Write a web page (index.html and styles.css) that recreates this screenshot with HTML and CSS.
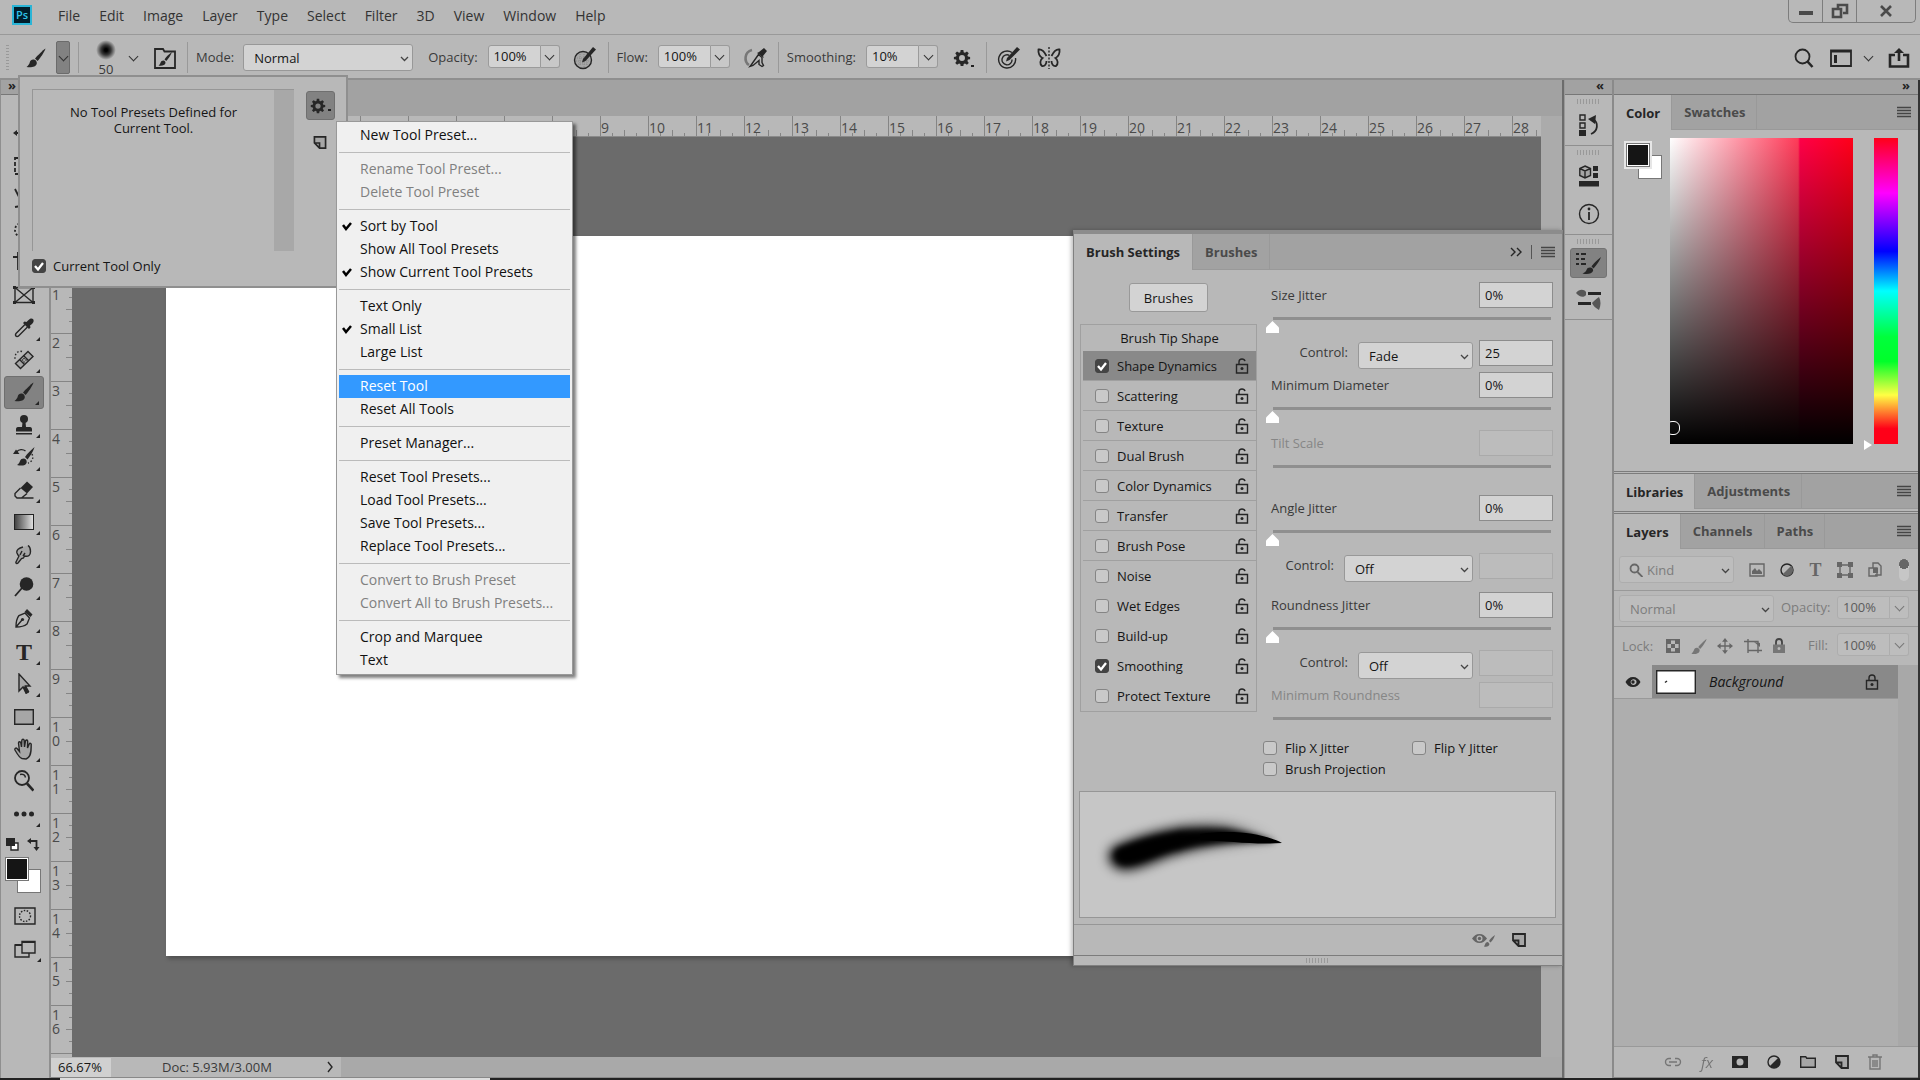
FILE: index.html
```html
<!DOCTYPE html>
<html lang="en">
<head>
    <meta charset="UTF-8">
    <meta name="viewport" content="width=device-width, initial-scale=1.0">
    <title>Photoshop</title>
    <link rel="stylesheet" href="styles.css">
</head>
<body>
    <svg class="sprite" aria-hidden="true">
        <symbol id="brush" viewBox="0 0 20 20"><path d="M19.5.5C17 2 11 8 9 10.5l2.5 2.500C14 10.500 18.500 4 19.500.5z"/><path d="M8 11.500c-2-.4-3.600.6-4.200 2.700-.5 2-1.500 3.400-3.300 4.800 4.500.9 9.500 0 10.300-3.500.3-1.900-.9-3.500-2.800-4z"/></symbol>
        <symbol id="gear" viewBox="0 0 20 20"><path fill-rule="evenodd" d="M8.500 1h3l.4 2.600 1.400.6 2.200-1.500 2 2-1.500 2.200.6 1.500 2.400.4v2.600l-2.400.4-.6 1.500 1.500 2.200-2 2-2.200-1.500-1.400.6-.4 2.400h-3l-.4-2.400-1.400-.6-2.200 1.500-2-2L4 13.300l-.6-1.500L1 11.400V8.800l2.400-.4L4 6.900 2.500 4.700l2-2 2.200 1.500 1.400-.6zM10 6.800a3.300 3.300 0 1 0 0 6.600 3.300 3.300 0 0 0 0-6.600z"/></symbol>
        <symbol id="page" viewBox="0 0 14 14"><path class="fillsoft" d="M1 1h12v12H6L1 8z"/><path class="ln2" d="M1 1h12v12H6.500L1 7.500zM1 7.500h5.500V13"/></symbol>
        <symbol id="menu" viewBox="0 0 14 12"><path class="ln" d="M0 1.500h14M0 4.500h14M0 7.500h14M0 10.500h14"/></symbol>
        <symbol id="unlock" viewBox="0 0 14 16"><path class="ln" d="M1.500 6.500h11v8.500h-11zM4 6.500V4c0-2 1-3 3-3 1.800 0 2.700.8 3 2.200"/><circle cx="7" cy="10.500" r="1.500"/></symbol>
        <symbol id="lock" viewBox="0 0 14 16"><path class="ln" d="M1.500 6.500h11v8.500h-11zM4 6.500V4c0-2 1-3 3-3s3 1 3 3v2.500"/><circle cx="7" cy="10.500" r="1.500"/></symbol>
        <symbol id="padlock" viewBox="0 0 14 16"><path class="ln2" d="M4 7V4c0-2 1-3 3-3s3 1 3 3v3"/><path fill-rule="evenodd" d="M1 6.500h12V15H1zM7 9a1.500 1.500 0 1 0 0 3 1.500 1.500 0 0 0 0-3z"/></symbol>
        <symbol id="eye" viewBox="0 0 16 12"><path fill-rule="evenodd" d="M8 1C4.500 1 2 3 .5 6c1.500 3 4 5 7.500 5s6-2 7.500-5C14 3 11.500 1 8 1zm0 2.200a3 2.900 0 1 1 0 5.700 3 2.900 0 0 1 0-5.700z"/><circle cx="8" cy="6" r="1.700"/></symbol>
        <symbol id="half" viewBox="0 0 14 14"><circle class="ln" cx="7" cy="7" r="6"/><path d="M11.300 2.700A6 6 0 1 1 2.700 11.300z"/></symbol>
    </svg>

    <header class="menubar">
        <div class="logo">Ps</div>
        <nav>
            <a href="#">File</a>
            <a href="#">Edit</a>
            <a href="#">Image</a>
            <a href="#">Layer</a>
            <a href="#">Type</a>
            <a href="#">Select</a>
            <a href="#">Filter</a>
            <a href="#">3D</a>
            <a href="#">View</a>
            <a href="#">Window</a>
            <a href="#">Help</a>
        </nav>
        <div class="window-buttons">
            <button aria-label="Minimize"><svg width="14" height="14" viewBox="0 0 14 14"><path d="M0 7h14v4H0z"/></svg></button>
            <button aria-label="Restore"><svg width="18" height="16" viewBox="0 0 18 16"><path class="ln3" d="M7 5V2h9v8h-4M2 6h8v8H2z"/></svg></button>
            <button class="close" aria-label="Close"><svg width="14" height="14" viewBox="0 0 14 14"><path class="ln3" d="M2 2l10 10M12 2L2 12"/></svg></button>
        </div>
    </header>

    <div class="options">
        <span class="grip-v"></span>
        <button class="opt-brush" aria-label="Brush tool"><svg width="20" height="20"><use href="#brush"/></svg></button>
        <button class="opt-drop" aria-label="Tool presets"></button>
        <span class="sep"></span>
        <div class="tip"><span class="tip-dot"></span><span>50</span></div>
        <button class="tip-drop" aria-label="Brush picker"></button>
        <button class="opt-folder" aria-label="Toggle brush settings"><svg width="24" height="24" viewBox="0 0 24 24"><path class="ln2" d="M2 3h8l1.500 2.500H22V22H2z"/><path d="M19 6c-3 2-6 5-7.500 7.500l1.800 1.600C15.500 12.500 18 9 19 6zM10.500 14.500c-1.500 0-2.500.8-3 2.300-.3 1.200-1 2-2 2.700 3 .6 6.600 0 7-2.500 0-1.300-.8-2.300-2-2.500z"/></svg></button>
        <span class="sep"></span>
        <label for="mode">Mode:</label>
        <select id="mode" class="mode"><option>Normal</option></select>
        <label for="opacity">Opacity:</label>
        <div class="combo"><input id="opacity" type="text" value="100%"><button aria-label="Opacity slider"></button></div>
        <button class="opt-icon" aria-label="Pressure for opacity"><svg width="24" height="24" viewBox="0 0 24 24"><circle class="ln fillsoft" cx="10" cy="14" r="8.500"/><path class="dash" d="M4 12h12M3 15h14M5 18h10M7 8v12M11 8v13M14 8v12"/><path d="M20 1l3 2.500L12.500 15 9 16.500l1-3.500z"/></svg></button>
        <span class="sep"></span>
        <label for="flow">Flow:</label>
        <div class="combo"><input id="flow" type="text" value="100%"><button aria-label="Flow slider"></button></div>
        <button class="opt-icon" aria-label="Airbrush"><svg width="24" height="20" viewBox="0 0 24 20"><path class="ln3 soft" d="M9 2C1 4 1 14 6 17"/><path d="M21 0l3 3-4 5 1 2-7-5 2-1z"/><path class="ln" d="M15.500 6.500L8.500 16.500 7 18.500l3-1 6-5v4l3 2 1.500-1-1.500-3V9.500z"/></svg></button>
        <span class="sep"></span>
        <label for="smooth">Smoothing:</label>
        <div class="combo"><input id="smooth" type="text" value="10%"><button aria-label="Smoothing slider"></button></div>
        <button class="opt-icon" aria-label="Smoothing options"><svg width="18" height="18"><use href="#gear"/></svg><span class="dot"></span></button>
        <span class="sep"></span>
        <button class="opt-icon" aria-label="Pressure for size"><svg width="24" height="24" viewBox="0 0 24 24"><path class="ln" d="M15 6.500A8.500 8.500 0 1 0 18.500 12M12.500 9.500A5 5 0 1 0 15 13.500"/><path d="M20 1l3 2.500L12.500 14 9 15.500l1-3.500z"/></svg></button>
        <button class="opt-icon" aria-label="Symmetry"><svg width="24" height="24" viewBox="0 0 24 24"><path class="ln2" d="M9.500 10C7 5 4 3 1.500 3.500 1 7 2.500 11 5.500 12c-2.500 2-3 6-.5 8 3 .5 4.500-2 4.500-5M14.500 10c2.500-5 5.500-7 8-6.500.5 3.500-1 7.500-4 8.500 2.500 2 3 6 .5 8-3 .5-4.500-2-4.500-5"/><path class="ln" stroke-dasharray="2 1.500" d="M12 1v22"/></svg></button>
        <div class="options-right">
            <button aria-label="Search"><svg width="20" height="20" viewBox="0 0 20 20"><circle class="ln2" cx="8.500" cy="8.500" r="7"/><path class="ln3" d="M13.500 13.500l5 5.500"/></svg></button>
            <button aria-label="Workspace"><svg width="22" height="18" viewBox="0 0 22 18"><path class="ln2" d="M1 1.500h20v15.500H1z"/><path d="M1 1h20v2.500H1zM4 6h3v8H4z"/></svg></button>
            <button class="tip-drop" aria-label="Workspace list"></button>
            <button aria-label="Share"><svg width="22" height="20" viewBox="0 0 22 20"><path class="ln3" d="M7 7H2v11.500h18V7h-5M11 13V3"/><path d="M11 0l5 5H6z"/></svg></button>
        </div>
    </div>

    <main class="workspace">
        <aside class="toolbar">
            <div class="strip left">»</div>
            <div class="tools">
                <button aria-label="Move"><svg width="22" height="22" viewBox="0 0 22 22"><path class="ln2" d="M11 3v16M3 11h16"/><path d="M11 0l3 4H8zM11 22l3-4H8zM0 11l4-3v6zM22 11l-4-3v6z"/></svg></button>
                <button aria-label="Marquee"><svg width="22" height="22" viewBox="0 0 22 22"><path class="ln2" stroke-dasharray="4 2" d="M2 3h18v16H2z"/></svg></button>
                <button aria-label="Lasso"><svg width="22" height="22" viewBox="0 0 22 22"><path class="ln2" d="M2 2l6 12 12-8-6 12-12 2"/></svg></button>
                <button aria-label="Quick selection"><svg width="22" height="22" viewBox="0 0 22 22"><circle class="ln2" stroke-dasharray="2 2" cx="9" cy="11" r="7"/></svg></button>
                <button aria-label="Crop"><svg width="22" height="22" viewBox="0 0 22 22"><path class="ln2" d="M5 0v17h17M0 5h17v17"/></svg></button>
                <button aria-label="Frame"><svg width="22" height="18" viewBox="0 0 22 18"><path class="ln" d="M2 1.500h18v15H2zM2 1.500l18 15M20 1.500l-18 15"/><path d="M0 0h3v3H0zM19 0h3v3h-3zM0 15h3v3H0zM19 15h3v3h-3z"/></svg></button>
                <button class="more" aria-label="Eyedropper"><svg width="20" height="20" viewBox="0 0 20 20"><path class="ln" d="M11 6.500L2 15.500c-1 1.500-.5 3 1 3 .5 0 1 0 1.500-.5l9-9"/><path d="M14 2.500c2-2.500 4-2.500 5-1.500s1 3-1 5l-2 1.500.5 2-1.500 1.500L9 5l1.500-1.500 2 .5z"/></svg></button>
                <button class="more" aria-label="Healing brush"><svg width="20" height="20" viewBox="0 0 20 20"><path class="ln fillsoft" d="M14 1.500l5 5-12.500 12-5-5z"/><path class="ln" d="M9.500 5.500l5 5M5.500 9.500l5 5"/><path class="ln" stroke-dasharray="1.500 2" d="M8 1.500C4 0 .5 4 1 9"/><circle cx="10" cy="8.500" r=".8"/><circle cx="12" cy="10" r=".8"/><circle cx="8.500" cy="10" r=".8"/><circle cx="10" cy="12" r=".8"/></svg></button>
                <button class="more active" aria-label="Brush"><svg width="20" height="20"><use href="#brush"/></svg></button>
                <button class="more" aria-label="Clone stamp"><svg width="18" height="20" viewBox="0 0 18 20"><circle cx="9" cy="4" r="4"/><path d="M7.500 7h3l.5 5h4c1.500 0 2 1 2 2.500v2H1v-2C1 13 1.500 12 3 12h4zM1 18h16v1.500H1z"/></svg></button>
                <button class="more" aria-label="History brush"><svg width="22" height="20" viewBox="0 0 22 20"><path d="M21.500 0C18 3 14 7 12 10l2.500 2.500C17 9.500 20.500 4 21.500 0zM11 11.500c-2 0-3.500.8-4 2.500s-1.500 3-3 4c4 1.200 9 .8 9.700-2.500.2-2-.8-3.700-2.700-4zM0 7l3-4.500L6.500 7z"/><path class="ln" d="M3.500 5C6 2 10 2 12.500 4"/><path class="ln" stroke-dasharray="1.500 2" d="M19 7c2 4 0 8-4 9"/></svg></button>
                <button class="more" aria-label="Eraser"><svg width="20" height="18" viewBox="0 0 20 18"><path d="M13 .5l6 5.500-6 6.500L6.500 7z"/><path class="ln" d="M6.500 7L1 12.500V15l2 2h4.500l5.500-4.500M5 17h14.500"/></svg></button>
                <button class="more" aria-label="Gradient"><span class="gradient-icon"></span></button>
                <button class="more" aria-label="Smudge"><svg width="18" height="20" viewBox="0 0 18 20"><path class="ln fillsoft" d="M8 2C4 3 1 5 2 8l1 2 1 1-3 6c-.5 1.500 1 2 2 1l3.500-4.500 2-.5 1-2c4 1 6-1 6-4.500 0-3-1-5-2.500-6"/><path class="ln" d="M5 10l2-4M8 11l2-3"/></svg></button>
                <button class="more" aria-label="Burn"><svg width="20" height="20" viewBox="0 0 20 20"><circle cx="12.500" cy="7" r="6.800"/><path class="ln2" d="M8 11l-7 8"/></svg></button>
                <button class="more" aria-label="Pen"><svg width="20" height="20" viewBox="0 0 20 20"><path class="ln" d="M2 18c0-5 1-9 3-11.500L11 4l4.500 5-2.500 6C10 17.500 6 18 2 18zl6-7"/><path d="M13 0l5.500 5.500L16.500 8 10.500 3z"/><circle cx="8.500" cy="10.500" r="1.600"/></svg></button>
                <button class="more serif" aria-label="Type">T</button>
                <button class="more" aria-label="Path selection"><svg width="16" height="22" viewBox="0 0 16 22"><path class="ln fillsoft" d="M3 1v17l4-4 3 6 2.500-1.500L9.500 13H14z"/><path d="M7 14l3 7 3-1.500L9.500 13z"/></svg></button>
                <button class="more" aria-label="Rectangle"><svg width="20" height="16" viewBox="0 0 20 16"><path class="ln fillsoft" d="M.7.7h18.600v14.600H.7z"/></svg></button>
                <button class="more" aria-label="Hand"><svg width="20" height="22" viewBox="0 0 20 22"><path class="ln fillsoft" d="M8 20.500c-3-1-5-5-7-8.500-.6-1.500 1-2.500 2-1.500l2.500 3-1-8.500c0-1.700 2-1.700 2.300 0L7.500 9l.3-6.500c.2-1.600 2.200-1.600 2.400 0L10.500 9l1-6c.3-1.500 2.200-1.200 2.200.3L13.500 10l1.700-4c.6-1.300 2.300-.6 2 .8C17 11 18 19 12 21z"/></svg></button>
                <button aria-label="Zoom"><svg width="20" height="22" viewBox="0 0 20 22"><circle class="ln2" cx="8" cy="8" r="7"/><path class="ln" d="M6 4.500c3-1 5 .5 5.500 3"/><path class="ln3" d="M13 13.500l6.500 7"/></svg></button>
                <button class="more" aria-label="Edit toolbar"><svg width="20" height="6" viewBox="0 0 20 6"><circle cx="2.500" cy="3" r="2.500"/><circle cx="10" cy="3" r="2.500"/><circle cx="17.500" cy="3" r="2.500"/></svg></button>
            </div>
            <div class="swap">
                <svg width="13" height="13" viewBox="0 0 13 13"><path class="ln white" d="M5 5h7v7H5z"/><path d="M0 0h9v8H0z"/></svg>
                <svg width="13" height="13" viewBox="0 0 13 13"><path class="ln2" d="M3 3h6.500v7"/><path d="M0 3l4-3v6zM9.500 13l-3-4h6z"/></svg>
            </div>
            <div class="colors"><span class="bg"></span><span class="fg"></span></div>
            <button class="mode-button" aria-label="Quick mask"><svg width="22" height="18" viewBox="0 0 22 18"><path class="ln" d="M1 1h20v16H1z"/><circle class="ln" stroke-dasharray="1.500 1.500" cx="11" cy="9" r="5.500"/></svg></button>
            <button class="mode-button more" aria-label="Screen mode"><svg width="22" height="18" viewBox="0 0 22 18"><path class="ln" d="M7 5H1v12h14v-4M8 1.500h13V13H8z"/><path d="M1 4h7v2H1zM8 1h13v2H8z"/></svg></button>
        </aside>

        <section class="document">
            <div class="doc-tabs"></div>
            <div class="doc-body">
                <div class="ruler-h">
                    <span></span><span></span><span></span><span></span><span></span><span></span><span></span><span></span><span></span><span></span><span></span><span>9</span><span>10</span><span>11</span><span>12</span><span>13</span><span>14</span><span>15</span><span>16</span><span>17</span><span>18</span><span>19</span><span>20</span><span>21</span><span>22</span><span>23</span><span>24</span><span>25</span><span>26</span><span>27</span><span>28</span>
                </div>
                <div class="ruler-v">
                    <span></span><span></span><span></span><span>1</span><span>2</span><span>3</span><span>4</span><span>5</span><span>6</span><span>7</span><span>8</span><span>9</span><span>10</span><span>11</span><span>12</span><span>13</span><span>14</span><span>15</span><span>16</span><span></span>
                </div>
                <div class="pasteboard"><div class="canvas"></div></div>
                <div class="scroll-v"></div>
            </div>
            <footer class="status">
                <input type="text" value="66.67%" aria-label="Zoom level">
                <span class="doc-size">Doc: 5.93M/3.00M</span>
                <button aria-label="Status menu"><svg width="6" height="12" viewBox="0 0 6 12"><path class="ln" d="M1 1l4 5-4 5"/></svg></button>
            </footer>
        </section>

        <aside class="dock">
            <div class="strip">«</div>
            <div class="dock-group">
                <span class="grip-h"></span>
                <button aria-label="History"><svg width="20" height="24" viewBox="0 0 20 24"><path class="ln" d="M1 2h5v5H1zM1 10h5v5H1z"/><path d="M0 17h7v6H0zM9 6l8-4-1 9z"/><path class="ln2" d="M14 6c6 4 5 12-2 15"/></svg></button>
            </div>
            <div class="dock-group">
                <span class="grip-h"></span>
                <button aria-label="Properties"><svg width="20" height="22" viewBox="0 0 20 22"><path class="ln fillsoft" d="M6 1l5.500 2.500v7L6 13 .8 10.500v-7zM.8 3.500L6 6l5.500-2.500M6 6v7"/><path d="M14 1h5v5h-5zM14 8h5v5h-5zM0 16h20v5.500H0z"/></svg></button>
                <button aria-label="Info"><svg width="22" height="22" viewBox="0 0 22 22"><circle class="ln" cx="11" cy="11" r="9.500"/><path class="ln2" d="M11 9v8"/><circle cx="11" cy="6" r="1.400"/></svg></button>
            </div>
            <div class="dock-group">
                <span class="grip-h"></span>
                <button class="active" aria-label="Brush settings"><svg width="26" height="24" viewBox="0 0 26 24"><path d="M0 2h3v2H0zM0 7h3v2H0zM0 12h3v2H0zM5 2h5v2H5zM5 7h4v2H5zM5 12h5v2H5zM25 6c-4 3-8 7-9.500 9.500l2 2C20.500 14 24 9.500 25 6zM14.500 16.500c-2-.2-3.500.6-4 2.500-.4 1.600-2 2.500-4 3.500 5 1.200 9.500.3 10.500-2.500.5-1.900-.8-3.300-2.500-3.500z"/></svg></button>
                <button aria-label="Brushes"><svg width="26" height="22" viewBox="0 0 26 22"><path class="fillmid" d="M0 5c3-4 8-4 10-1v3c-2 3-7 2-10-2zM16 15c2-2 4-4 7-6 2 4 2 8 0 13-3-2-6-4-7-7z"/><path d="M12 4h13v3H12zM2 14h13v3H2z"/></svg></button>
            </div>
        </aside>

        <aside class="panels">
            <div class="strip">»</div>
            <section class="panel color-panel">
                <div class="tabs"><button class="on">Color</button><button>Swatches</button><svg class="burger" width="14" height="12"><use href="#menu"/></svg></div>
                <div class="picker">
                    <div class="picker-swatch"><span class="bg"></span><span class="fg"></span></div>
                    <div class="field"><span class="field-mark"></span></div>
                    <div class="hue"><span class="hue-mark"></span></div>
                </div>
            </section>
            <section class="panel libraries">
                <div class="tabs"><button class="on">Libraries</button><button>Adjustments</button><svg class="burger" width="14" height="12"><use href="#menu"/></svg></div>
            </section>
            <section class="panel layers">
                <div class="tabs"><button class="on">Layers</button><button>Channels</button><button>Paths</button><svg class="burger" width="14" height="12"><use href="#menu"/></svg></div>
                <div class="layer-row filter">
                    <div class="kind"><svg width="14" height="14" viewBox="0 0 14 14"><circle class="ln2" cx="5.500" cy="5.500" r="4"/><path class="ln2" d="M8.500 9l5 5"/></svg><select aria-label="Filter kind" disabled><option>Kind</option></select></div>
                    <div class="filter-icons">
                        <svg width="16" height="14" viewBox="0 0 16 14"><path class="ln" d="M1 1h14v12H1z"/><path d="M3 11V8l3-3 2 3 2-2 3 3v2z"/></svg>
                        <svg width="14" height="14"><use href="#half"/></svg>
                        <span class="serif small">T</span>
                        <svg width="16" height="16" viewBox="0 0 16 16"><path class="ln" d="M3 3h10v10H3z"/><path d="M0 0h5v5H0zM11 0h5v5h-5zM0 11h5v5H0zM11 11h5v5h-5z"/></svg>
                        <svg width="14" height="16" viewBox="0 0 14 16"><path class="ln" d="M5 6V1h5l3 3v9H7M1 6h8v8H1z"/><path d="M5 6h5v5H5z"/></svg>
                    </div>
                    <span class="toggle"></span>
                </div>
                <div class="layer-row">
                    <select class="blend" aria-label="Blend mode" disabled><option>Normal</option></select>
                    <label for="lopacity">Opacity:</label>
                    <div class="combo"><input id="lopacity" type="text" value="100%" disabled><button aria-label="Layer opacity" disabled></button></div>
                </div>
                <div class="layer-row locks">
                    <span>Lock:</span>
                    <div class="lock-icons">
                        <svg width="14" height="14" viewBox="0 0 14 14"><path class="ln" d="M.7.7h12.600v12.600H.7z"/><path d="M1 1h4v4H1zM9 1h4v4H9zM5 5h4v4H5zM1 9h4v4H1zM9 9h4v4H9z"/></svg>
                        <svg width="16" height="17"><use href="#brush"/></svg>
                        <svg width="16" height="16" viewBox="0 0 22 22"><path class="ln2" d="M11 3v16M3 11h16"/><path d="M11 0l4 5H7zM11 22l4-5H7zM0 11l5-4v8zM22 11l-5-4v8z"/></svg>
                        <svg width="18" height="14" viewBox="0 0 18 14"><path class="ln" d="M0 2.500h14v9M4 0v11.500h14M4 12v2M14 12v2"/><path d="M10 3l6 5V4z"/></svg>
                        <svg width="14" height="16"><use href="#padlock"/></svg>
                    </div>
                    <label for="fill">Fill:</label>
                    <div class="combo"><input id="fill" type="text" value="100%" disabled><button aria-label="Layer fill" disabled></button></div>
                </div>
                <div class="layer-list">
                    <div class="layer">
                        <button class="eye" aria-label="Toggle visibility"><svg width="16" height="12"><use href="#eye"/></svg></button>
                        <div class="layer-main">
                            <svg class="thumb" width="40" height="24" viewBox="0 0 40 24"><path class="ln white" d="M.7.7h38.600v22.600H.7z"/><path class="ln" d="M9 12.500l2-1.500"/></svg>
                            <em>Background</em>
                            <svg width="14" height="16"><use href="#lock"/></svg>
                        </div>
                    </div>
                </div>
                <div class="layer-footer">
                    <svg class="dim" width="18" height="10" viewBox="0 0 18 10"><path class="ln" d="M7 1.500H5a3.500 3.500 0 0 0 0 7h2M11 1.500h2a3.500 3.500 0 0 1 0 7h-2M5 5h8"/></svg>
                    <i class="dim fx">fx</i>
                    <svg width="16" height="12" viewBox="0 0 16 12"><path fill-rule="evenodd" d="M0 0h16v12H0zM8 2.500a3.500 3.500 0 1 0 0 7 3.500 3.500 0 0 0 0-7z"/></svg>
                    <svg width="14" height="14"><use href="#half"/></svg>
                    <svg width="16" height="12" viewBox="0 0 16 12"><path class="ln fillsoft" d="M.7.7h5l1 1.500h8.600v9H.7z"/></svg>
                    <svg width="14" height="14"><use href="#page"/></svg>
                    <svg class="dim" width="14" height="16" viewBox="0 0 14 16"><path class="ln" d="M0 3h14M5 3V1h4v2M2 3v12h10V3M5 6v7M7 6v7M9 6v7"/></svg>
                </div>
            </section>
        </aside>
    </main>
    <div class="taskbar"></div>

    <!-- floating brush panel -->
    <section class="brush-panel">
        <div class="tabs"><button class="on">Brush Settings</button><button>Brushes</button><span class="panel-tools"><svg width="12" height="10" viewBox="0 0 12 10"><path class="ln" d="M1 1l4 4-4 4M7 1l4 4-4 4"/></svg><span class="bar"></span></span><svg class="burger" width="14" height="12"><use href="#menu"/></svg></div>
        <div class="brush-body">
            <div class="brush-left">
                <button class="btn">Brushes</button>
                <ul class="brush-list">
                    <li class="tipshape">Brush Tip Shape</li>
                    <li class="line on"><input type="checkbox" id="b1" checked><label for="b1">Shape Dynamics</label><svg width="14" height="16"><use href="#unlock"/></svg></li>
                    <li class="line"><input type="checkbox" id="b2"><label for="b2">Scattering</label><svg width="14" height="16"><use href="#unlock"/></svg></li>
                    <li class="line"><input type="checkbox" id="b3"><label for="b3">Texture</label><svg width="14" height="16"><use href="#unlock"/></svg></li>
                    <li class="line"><input type="checkbox" id="b4"><label for="b4">Dual Brush</label><svg width="14" height="16"><use href="#unlock"/></svg></li>
                    <li class="line"><input type="checkbox" id="b5"><label for="b5">Color Dynamics</label><svg width="14" height="16"><use href="#unlock"/></svg></li>
                    <li class="line"><input type="checkbox" id="b6"><label for="b6">Transfer</label><svg width="14" height="16"><use href="#unlock"/></svg></li>
                    <li class="line"><input type="checkbox" id="b7"><label for="b7">Brush Pose</label><svg width="14" height="16"><use href="#unlock"/></svg></li>
                    <li><input type="checkbox" id="b8"><label for="b8">Noise</label><svg width="14" height="16"><use href="#unlock"/></svg></li>
                    <li><input type="checkbox" id="b9"><label for="b9">Wet Edges</label><svg width="14" height="16"><use href="#unlock"/></svg></li>
                    <li><input type="checkbox" id="b10"><label for="b10">Build-up</label><svg width="14" height="16"><use href="#unlock"/></svg></li>
                    <li><input type="checkbox" id="b11" checked><label for="b11">Smoothing</label><svg width="14" height="16"><use href="#unlock"/></svg></li>
                    <li><input type="checkbox" id="b12"><label for="b12">Protect Texture</label><svg width="14" height="16"><use href="#unlock"/></svg></li>
                </ul>
            </div>
            <div class="brush-right">
                <div class="jitter">
                    <label for="size">Size Jitter</label><input id="size" type="text" value="0%">
                    <input type="range" value="0" aria-label="Size jitter">
                </div>
                <div class="control"><label for="c1">Control:</label><select id="c1"><option>Fade</option></select><input type="text" value="25" aria-label="Fade steps"></div>
                <div class="jitter">
                    <label for="mind">Minimum Diameter</label><input id="mind" type="text" value="0%">
                    <input type="range" value="0" aria-label="Minimum diameter">
                </div>
                <div class="jitter off">
                    <label for="tilt">Tilt Scale</label><input id="tilt" type="text" disabled>
                    <input type="range" value="0" disabled aria-label="Tilt scale">
                </div>
                <div class="jitter gap">
                    <label for="angle">Angle Jitter</label><input id="angle" type="text" value="0%">
                    <input type="range" value="0" aria-label="Angle jitter">
                </div>
                <div class="control"><label for="c2">Control:</label><select id="c2" class="wide"><option>Off</option></select><input type="text" disabled aria-label="Angle steps"></div>
                <div class="jitter gap">
                    <label for="round">Roundness Jitter</label><input id="round" type="text" value="0%">
                    <input type="range" value="0" aria-label="Roundness jitter">
                </div>
                <div class="control"><label for="c3">Control:</label><select id="c3"><option>Off</option></select><input type="text" disabled aria-label="Roundness steps"></div>
                <div class="jitter off">
                    <label for="minr">Minimum Roundness</label><input id="minr" type="text" disabled>
                    <input type="range" value="0" disabled aria-label="Minimum roundness">
                </div>
                <div class="flips">
                    <div><input type="checkbox" id="fx"><label for="fx">Flip X Jitter</label></div>
                    <div><input type="checkbox" id="fy"><label for="fy">Flip Y Jitter</label></div>
                    <div><input type="checkbox" id="bp"><label for="bp">Brush Projection</label></div>
                </div>
            </div>
        </div>
        <div class="stroke-preview">
            <svg width="220" height="124" viewBox="0 0 220 124">
                <defs>
                    <filter id="soft1" filterUnits="userSpaceOnUse" x="0" y="0" width="220" height="124"><feGaussianBlur stdDeviation="6"/></filter>
                    <filter id="soft2" filterUnits="userSpaceOnUse" x="0" y="0" width="220" height="124"><feGaussianBlur stdDeviation="3"/></filter>
                    <linearGradient id="fadeOut"><stop offset="0.45" stop-color="#fff"/><stop offset="0.9" stop-color="#000"/></linearGradient>
                    <mask id="m1" maskUnits="userSpaceOnUse" x="0" y="0" width="220" height="124"><path fill="url(#fadeOut)" d="M0 0h220v124H0z"/></mask>
                </defs>
                <g mask="url(#m1)"><path filter="url(#soft1)" d="M32 56C60 41 110 30 150 33c20 3 38 10 52 17-35 1-80 4-112 14-20 7-32 14-46 14-14-1-19-14-12-22z"/></g>
                <path filter="url(#soft2)" d="M38 57C70 44 112 36 145 37c20 2 38 8 52 13-35 0-80 1-109 9-18 6-32 13-44 13-10-2-11-12-6-15z"/>
                <path d="M120 42c35-5 65 0 82 9-28 2-52-2-82-3z"/>
            </svg>
        </div>
        <div class="brush-footer">
            <svg class="mid" width="24" height="14" viewBox="0 0 24 14"><path fill-rule="evenodd" d="M7.500 1C4 1 2 3 0 5.500 2 8 4 10 7.500 10S13 8 15 5.500C13 3 11 1 7.500 1zm0 1.500a3 3 0 1 1 0 6 3 3 0 0 1 0-6z"/><circle cx="7.500" cy="5.500" r="1.700"/><path d="M23 2c-3 2-5 4-6 6l1.500 1.500C20.500 8 22 5 23 2zM16 9c-2 0-2.500 1-3 2.500L12 13.500c3 .5 5 0 5.500-2.500z"/></svg>
            <svg width="14" height="14"><use href="#page"/></svg>
        </div>
        <div class="brush-grip"><span class="grip-h"></span></div>
    </section>

    <!-- tool preset picker -->
    <section class="preset-popup">
        <div class="preset-list"><p>No Tool Presets Defined for<br>Current Tool.</p><span class="preset-scroll"></span></div>
        <div class="preset-side">
            <button class="gear-btn" aria-label="Preset menu"><svg width="16" height="16"><use href="#gear"/></svg><span class="dot"></span></button>
            <button aria-label="New preset"><svg width="14" height="13"><use href="#page"/></svg></button>
        </div>
        <div class="preset-only"><input type="checkbox" id="only" checked><label for="only">Current Tool Only</label></div>
    </section>

    <menu class="preset-menu">
        <li><button>New Tool Preset...</button></li>
        <li class="rule"></li>
        <li><button disabled>Rename Tool Preset...</button></li>
        <li><button disabled>Delete Tool Preset</button></li>
        <li class="rule"></li>
        <li><button class="ticked">Sort by Tool</button></li>
        <li><button>Show All Tool Presets</button></li>
        <li><button class="ticked">Show Current Tool Presets</button></li>
        <li class="rule"></li>
        <li><button>Text Only</button></li>
        <li><button class="ticked">Small List</button></li>
        <li><button>Large List</button></li>
        <li class="rule"></li>
        <li><button class="hot">Reset Tool</button></li>
        <li><button>Reset All Tools</button></li>
        <li class="rule"></li>
        <li><button>Preset Manager...</button></li>
        <li class="rule"></li>
        <li><button>Reset Tool Presets...</button></li>
        <li><button>Load Tool Presets...</button></li>
        <li><button>Save Tool Presets...</button></li>
        <li><button>Replace Tool Presets...</button></li>
        <li class="rule"></li>
        <li><button disabled>Convert to Brush Preset</button></li>
        <li><button disabled>Convert All to Brush Presets...</button></li>
        <li class="rule"></li>
        <li><button>Crop and Marquee</button></li>
        <li><button>Text</button></li>
    </menu>
</body>
</html>
```

FILE: styles.css
```css
* {
    box-sizing: border-box;
}
body {
    margin: 0;
    height: 100vh;
    display: flex;
    flex-direction: column;
    overflow: hidden;
    background: #b8b8b8;
    color: #3a3a3a;
    font-family: "Open Sans", "Noto Sans", sans-serif;
    font-size: 13px;
    line-height: 16px;
}
button, input, select {
    font: inherit;
    color: #151515;
    margin: 0;
}
button {
    padding: 0;
    border: none;
    background: none;
    display: flex;
    align-items: center;
    justify-content: center;
}
svg {
    display: block;
    flex: none;
    fill: #262626;
    stroke: none;
}
.sprite {
    position: absolute;
    width: 0;
    height: 0;
}
.ln, .ln2, .ln3 {
    fill: none;
    stroke: #262626;
    stroke-width: 1.4;
}
.ln2 {
    stroke-width: 1.8;
}
.ln3 {
    stroke-width: 2.6;
}
.fillsoft {
    fill: #a6a6a6;
}
.fillmid {
    fill: #565656;
}
.white {
    fill: #fff;
}
.soft {
    stroke: #777;
}
.dash {
    fill: none;
    stroke: #8a8a8a;
    stroke-dasharray: 1 1;
}
select {
    appearance: none;
    border: 1px solid #989898;
    border-radius: 3px;
    background: #d3d3d3 url('data:image/svg+xml,<svg xmlns="http://www.w3.org/2000/svg" width="9" height="6"><path d="M1 1l3.500 3.500L8 1" fill="none" stroke="%23444" stroke-width="1.300"/></svg>') no-repeat right 3px top 11px;
    padding: 0 10px;
    height: 27px;
}
input[type="text"] {
    border: 1px solid #8c8c8c;
    background: #d3d3d3;
    height: 26px;
    padding: 0 5px;
    min-width: 0;
}
input[type="text"]:disabled {
    background: #bcbcbc;
    border-color: #aaa;
}
input[type="checkbox"] {
    appearance: none;
    flex: none;
    width: 14px;
    height: 14px;
    border: 1px solid #858585;
    border-radius: 3px;
    background: #c9c9c9;
}
input[type="checkbox"]:checked {
    border-color: #444;
    background: #444 url('data:image/svg+xml,<svg xmlns="http://www.w3.org/2000/svg" width="12" height="12"><path d="M2 6l3 3.500L10 3" fill="none" stroke="white" stroke-width="2.300"/></svg>') no-repeat center;
}

/* menu bar */
.menubar {
    height: 35px;
    flex: none;
    display: flex;
    align-items: center;
    padding: 0 4px 4px 12px;
    border-bottom: 1px solid #999;
}
.logo {
    width: 20px;
    height: 20px;
    border: 2px solid #2ab4d6;
    background: #001d2b;
    color: #2fc3ea;
    font-size: 11px;
    font-weight: 600;
    line-height: 15px;
    text-align: center;
}
.menubar nav {
    display: flex;
    gap: 19px;
    margin: 2px 0 0 26px;
}
.menubar a {
    color: #333;
    font-size: 14px;
    text-decoration: none;
}
.window-buttons {
    display: flex;
    align-self: flex-start;
    margin-left: auto;
    height: 23px;
    border: 1px solid #7d7d7d;
    border-top: none;
    border-radius: 0 0 5px 5px;
}
.window-buttons button {
    width: 34px;
    border-right: 1px solid #7d7d7d;
}
.window-buttons .close {
    width: 58px;
    border-right: none;
}
.window-buttons svg {
    fill: #4a4a4a;
}
.window-buttons .ln3 {
    stroke: #4a4a4a;
}

/* options bar */
.options {
    height: 45px;
    flex: none;
    display: flex;
    align-items: center;
    padding: 2px 10px 0 6px;
    border-bottom: 2px solid #8f8f8f;
}
.options label {
    margin-top: -2px;
}
.grip-v {
    width: 3px;
    height: 26px;
    background: repeating-linear-gradient(#999 0 1px, transparent 1px 3px);
}
.opt-brush {
    width: 40px;
    margin-left: 4px;
    padding-left: 5px;
}
.opt-drop {
    width: 14px;
    height: 33px;
    margin-left: 3px;
    border: 1px solid #6b6b6b;
    border-radius: 2px;
    background: #828282;
}
.opt-drop::after, .tip-drop::after, .combo button::after {
    content: "";
    width: 6px;
    height: 6px;
    border: solid #333;
    border-width: 0 1px 1px 0;
    transform: translateY(-1px) rotate(45deg);
}
.sep {
    width: 1px;
    height: 31px;
    margin: 0 8px;
    background: #999;
}
.tip {
    width: 38px;
    height: 41px;
    display: flex;
    flex-direction: column;
    align-items: center;
    gap: 1px;
    padding-top: 3px;
}
.tip-dot {
    width: 20px;
    height: 20px;
    flex: none;
    border-radius: 50%;
    background: radial-gradient(#000 10%, rgba(0,0,0,0.7) 35%, transparent 70%);
}
.tip-drop {
    width: 16px;
    height: 16px;
}
.opt-folder {
    margin: 0 2px 0 12px;
}
.mode {
    width: 170px;
    margin: 0 15px 0 9px;
}
.combo {
    display: flex;
}
.combo input[type="text"] {
    width: 53px;
    height: 23px;
    border-color: #9b9b9b;
    border-radius: 3px 0 0 3px;
}
.combo button {
    width: 19px;
    height: 23px;
    border: 1px solid #9b9b9b;
    border-left: none;
    border-radius: 0 3px 3px 0;
    background: #c8c8c8;
}
.options .combo {
    margin: -3px 13px 0 10px;
}
.opt-icon {
    width: 24px;
    margin-right: 3px;
}
.opt-icon + .opt-icon {
    margin-left: 13px;
}
.sep + .opt-icon {
    margin-left: 2px;
}
.opt-icon .dot {
    margin-top: 16px;
}
.options-right {
    display: flex;
    align-items: center;
    gap: 16px;
    margin-left: auto;
}
.options-right .tip-drop {
    width: 8px;
    margin-left: -4px;
}

/* workspace */
.workspace {
    flex: 1;
    min-height: 0;
    display: flex;
}
.strip {
    height: 15px;
    flex: none;
    padding-right: 8px;
    border-bottom: 1px solid #777;
    background: #a2a2a2;
    color: #222;
    font-size: 13px;
    font-weight: bold;
    line-height: 11px;
    text-align: right;
}
.strip.left {
    padding-left: 7px;
    text-align: left;
}
.toolbar {
    width: 51px;
    flex: none;
    border-left: 1px solid #8f8f8f;
    border-right: 2px solid #8f8f8f;
}
.tools {
    display: grid;
    grid-template-rows: repeat(22, 1fr);
    height: 713px;
    margin-top: 22px;
    padding: 0 5px 0 3px;
}
.tools button, .mode-button {
    position: relative;
    border-radius: 3px;
}
.tools .active {
    background: #828282;
    border: 1px solid #6f6f6f;
}
.more::after {
    content: "";
    position: absolute;
    right: 4px;
    bottom: 3px;
    border: 2px solid #262626;
    border-top-color: transparent;
    border-left-color: transparent;
}
.gradient-icon {
    width: 20px;
    height: 16px;
    border: 1px solid #222;
    background: linear-gradient(90deg, #444, #e0e0e0);
}
.serif {
    font-family: "Liberation Serif", serif;
    font-size: 24px;
    font-weight: bold;
    color: #262626;
}
.serif.small {
    font-size: 18px;
    color: #666;
}
.swap {
    display: flex;
    justify-content: space-between;
    margin: 8px 9px 6px 5px;
}
.colors {
    position: relative;
    height: 37px;
    margin: 0 0 5px 4px;
}
.bg, .fg {
    position: absolute;
    width: 24px;
    height: 24px;
    border: 1px solid #777;
    background: #fff;
}
.colors .bg {
    left: 12px;
    top: 12px;
}
.fg {
    left: 0;
    top: 0;
    background: #151515;
    box-shadow: inset 0 0 0 1px #fff;
}
.mode-button {
    width: 41px;
    height: 33px;
    margin-left: 3px;
}

.document {
    flex: 1;
    min-width: 0;
    display: flex;
    flex-direction: column;
    border-right: 2px solid #6c6c6c;
}
.doc-tabs {
    height: 36px;
    flex: none;
    background: #a2a2a2;
}
.doc-body {
    flex: 1;
    min-height: 0;
    display: grid;
    grid-template-columns: 21px 1fr 21px;
    grid-template-rows: 21px 1fr;
}
.ruler-h, .ruler-v {
    overflow: hidden;
    color: #4a4a4a;
    font-size: 14px;
}
.ruler-h {
    grid-column: 1 / 3;
    display: flex;
    padding-left: 21px;
    border-bottom: 1px solid #8a8a8a;
}
.ruler-h span {
    flex: none;
    width: 48px;
    padding: 4px 0 0 1px;
    background:
        linear-gradient(#858585, #858585) 0 0 / 1px 100% no-repeat,
        linear-gradient(#858585, #858585) 12px 100% / 1px 3px no-repeat,
        linear-gradient(#858585, #858585) 24px 100% / 1px 6px no-repeat,
        linear-gradient(#858585, #858585) 36px 100% / 1px 3px no-repeat;
}
.ruler-v {
    grid-column: 1;
    grid-row: 2;
    padding-top: 4px;
}
.ruler-v span {
    display: block;
    height: 48px;
    padding: 3px 12px 0 1px;
    line-height: 14px;
    word-break: break-all;
    background:
        linear-gradient(#858585, #858585) 0 0 / 100% 1px no-repeat,
        linear-gradient(#858585, #858585) 100% 12px / 3px 1px no-repeat,
        linear-gradient(#858585, #858585) 100% 24px / 6px 1px no-repeat,
        linear-gradient(#858585, #858585) 100% 36px / 3px 1px no-repeat;
}
.pasteboard {
    grid-column: 2;
    grid-row: 2;
    overflow: hidden;
    padding: 99px 0 0 94px;
    background: #6b6b6b;
}
.canvas {
    width: 1280px;
    height: 720px;
    background: #fff;
    box-shadow: 2px 3px 4px rgba(0,0,0,0.25);
}
.scroll-v {
    grid-column: 3;
    grid-row: 1 / 3;
    background: #ababab;
}
.status {
    height: 21px;
    flex: none;
    display: flex;
    align-items: center;
    background: linear-gradient(90deg, #b8b8b8 290px, #a9a9a9 290px);
    border-bottom: 1px solid #888;
}
.status input[type="text"] {
    width: 60px;
    height: 19px;
    padding: 0 7px;
    border: none;
    background: #d0d0d0;
}
.doc-size {
    width: 165px;
    margin-left: 51px;
}

.dock {
    width: 48px;
    flex: none;
    border-left: 1px solid #999;
}
.dock-group {
    display: flex;
    flex-direction: column;
    align-items: center;
    padding: 4px 0 3px;
    border-bottom: 1px solid #8f8f8f;
    gap: 4px;
}
.grip-h {
    width: 24px;
    height: 5px;
    background: repeating-linear-gradient(90deg, #999 0 1px, transparent 1px 3px);
}
.dock-group button {
    width: 37px;
    height: 34px;
}
.dock-group .active {
    height: 30px;
    border: 1px solid #737373;
    border-radius: 3px;
    background: #828282;
}

.panels {
    width: 308px;
    flex: none;
    display: flex;
    flex-direction: column;
    border-left: 2px solid #8a8a8a;
    border-right: 2px solid #333;
}
.tabs {
    height: 36px;
    flex: none;
    display: flex;
    align-items: stretch;
    border-bottom: 1px solid #999;
    background: #a2a2a2;
}
.panels .tabs {
    height: 35px;
}
.tabs button {
    padding: 0 12px;
    border-right: 1px solid #999;
    color: #4a4a4a;
    font-weight: bold;
}
.panels .tabs button {
    padding: 0 11px 0 12px;
}
.tabs .on {
    background: #b8b8b8;
    color: #262626;
    margin-bottom: -1px;
}
.burger {
    align-self: center;
    margin: 0 7px 0 auto;
}
.burger use {
    opacity: 0.75;
}
.panel {
    border-bottom: 3px double #7c7c7c;
}
.libraries {
    padding-bottom: 2px;
}
.panel.layers {
    flex: 1;
    display: flex;
    flex-direction: column;
    border-bottom: 1px solid #888;
}
.picker {
    display: flex;
    padding: 8px 0 27px 9px;
}
.picker-swatch {
    position: relative;
    width: 47px;
}
.picker-swatch .fg {
    left: 3px;
    top: 5px;
    outline: 2px solid #e6e6e6;
}
.picker-swatch .bg {
    left: 15px;
    top: 17px;
}
.field, .hue {
    position: relative;
    height: 306px;
}
.field {
    flex: 1;
    overflow: hidden;
    background: linear-gradient(transparent, #000), linear-gradient(90deg, #fff, #ff3a58 70%, #ff0048 71%, #ff0018);
}
.field-mark {
    position: absolute;
    left: -4px;
    bottom: 9px;
    width: 14px;
    height: 14px;
    border: 1px solid #fff;
    border-radius: 6px;
}
.hue {
    width: 24px;
    margin: 0 20px 0 21px;
    background: linear-gradient(#ff0018 0%, #f0f 28%, #f0f 30%, #2000ff 54%, #00f 62%, #0ff 83%, #00ff3c 100%);
    background: linear-gradient(#ff0018 0%, #f0f 18%, #00f 37%, #0ff 50%, #00ff3c 65%, #00ff2a 73%, #ff4 84%, #ff0018 95%);
}
.hue-mark {
    position: absolute;
    left: -10px;
    bottom: -6px;
    border: 5px solid transparent;
    border-left: 8px solid #fff;
    border-right: none;
}
.layer-row {
    height: 36px;
    display: flex;
    align-items: center;
    padding: 0 9px 0 5px;
    border-bottom: 1px solid #999;
    color: #7c7c7c;
}
.layers select, .layers input[type="text"], .layer-row .combo button {
    background-color: #bdbdbd;
    border-color: #adadad;
    color: #7c7c7c;
    opacity: 1;
}
.layers .combo input[type="text"] {
    color: #5c5c5c;
}
.layer-row .combo button::after {
    opacity: 0.5;
}
.layer-row svg, .mid {
    fill: #666;
}
.layer-row .ln, .layer-row .ln2 {
    stroke: #666;
}
.lock-icons use {
    opacity: 0.8;
}
.layer-row label, .layer-row .combo {
    margin-top: -3px;
}
.layer-row .combo {
    margin-left: auto;
}
.filter {
    height: 42px;
}
.kind {
    position: relative;
    width: 115px;
}
.kind svg {
    position: absolute;
    left: 10px;
    top: 7px;
}
.kind select {
    width: 100%;
    padding-left: 27px;
}
.filter-icons {
    flex: 1;
    display: flex;
    align-items: center;
    justify-content: space-between;
    padding: 0 17px 0 15px;
}
.toggle {
    width: 10px;
    height: 22px;
    border-radius: 5px;
    background: radial-gradient(circle at 5px 5px, #666 5px, #c6c6c6 5px);
}
.blend {
    width: 155px;
    margin-right: 7px;
}
.locks {
    height: 38px;
    border-bottom: none;
    padding-left: 8px;
}
.lock-icons {
    flex: 1;
    display: flex;
    align-items: center;
    justify-content: space-between;
    padding: 0 22px 0 13px;
}
.layer-row.locks .combo {
    margin-left: 9px;
}
.layer-list {
    flex: 1;
    background: linear-gradient(90deg, #aeaeae calc(100% - 20px), #a8a8a8 0);
}
.layer {
    display: flex;
    height: 34px;
    margin-right: 20px;
    border-bottom: 1px solid #999;
    background: #b8b8b8;
}
.eye {
    width: 38px;
    flex: none;
}
.layer-main {
    flex: 1;
    display: flex;
    align-items: center;
    gap: 13px;
    padding: 0 19px 0 4px;
    background: #898989;
    color: #151515;
}
.layer-main em {
    flex: 1;
    font-size: 14px;
}
.layer-footer {
    height: 31px;
    display: flex;
    align-items: center;
    justify-content: space-between;
    padding: 0 36px 0 50px;
    border-top: 1px solid #999;
}
.dim {
    opacity: 0.45;
}
.fx {
    font-size: 15px;
    color: #222;
}
.taskbar {
    height: 2px;
    flex: none;
    background: linear-gradient(90deg, #222 60px, #ddd 60px 490px, #222 490px);
}

/* brush settings */
.brush-panel {
    position: absolute;
    top: 230px;
    right: 357px;
    width: 490px;
    border: 1px solid #808080;
    border-top: 4px solid #8c8c8c;
    background: #b8b8b8;
    box-shadow: -2px 0 4px rgba(0,0,0,0.25);
}
.panel-tools {
    display: flex;
    align-items: center;
    gap: 9px;
    margin-left: auto;
}
.panel-tools + .burger {
    margin-left: 9px;
}
.bar {
    width: 1px;
    height: 14px;
    background: #555;
}
.brush-body {
    display: flex;
    gap: 9px;
    padding: 12px 5px 0 6px;
}
.brush-left {
    width: 177px;
    flex: none;
}
.btn {
    width: 79px;
    height: 29px;
    margin: 1px auto 12px;
    border: 1px solid #999;
    border-radius: 3px;
    background: #d3d3d3;
}
.brush-list {
    margin: 0;
    padding: 0 0 0 2px;
    list-style: none;
    border: 1px solid #a0a0a0;
    color: #151515;
}
.brush-list li {
    display: flex;
    align-items: center;
    gap: 8px;
    height: 30px;
    padding: 0 7px 0 12px;
}
.brush-list .line {
    border-bottom: 1px solid #a0a0a0;
}
.brush-list .tipshape {
    height: 26px;
    justify-content: center;
    padding: 0;
}
.brush-list .on {
    background: #898989;
}
.brush-list label {
    flex: 1;
    white-space: nowrap;
}
.brush-right {
    flex: 1;
    display: flex;
    flex-direction: column;
    gap: 7px;
}
.jitter, .control {
    display: flex;
    flex-wrap: wrap;
    align-items: center;
    justify-content: space-between;
    padding: 0 4px 0 5px;
}
.jitter {
    row-gap: 9px;
}
.jitter.off label {
    color: #868686;
}
.jitter.gap {
    margin-top: 7px;
}
.jitter input[type="text"], .control input {
    width: 74px;
}
.jitter input[type="range"] {
    appearance: none;
    flex: 1 0 100%;
    height: 16px;
    margin: 0 0 0 -5px;
    background: linear-gradient(#8f8f8f, #8f8f8f) 7px 0 / calc(100% - 9px) 3px no-repeat;
}
.jitter input[type="range"]::-webkit-slider-thumb {
    appearance: none;
    width: 13px;
    height: 12px;
    margin-top: 4px;
    background: #fff;
    clip-path: polygon(50% 0, 100% 55%, 100% 100%, 0 100%, 0 55%);
}
.jitter input[type="range"]:disabled::-webkit-slider-thumb {
    opacity: 0;
}
.control {
    height: 25px;
    align-items: flex-start;
    justify-content: flex-end;
    flex-wrap: nowrap;
}
.control label {
    margin-top: 4px;
}
.control select {
    width: 115px;
    margin: 2px 6px 0 10px;
}
.control .wide {
    width: 129px;
}
.flips {
    display: grid;
    grid-template-columns: 149px 1fr;
    row-gap: 5px;
    margin-left: -3px;
    color: #151515;
}
.flips div {
    display: flex;
    align-items: center;
    gap: 8px;
}
.stroke-preview {
    height: 127px;
    margin: 14px 6px 6px 5px;
    border: 1px solid #969696;
    background: #c6c6c6;
}
.stroke-preview svg {
    fill: #000;
}
.brush-footer {
    height: 32px;
    display: flex;
    align-items: center;
    justify-content: flex-end;
    gap: 16px;
    padding-right: 36px;
    border-top: 1px solid #969696;
    border-bottom: 1px solid #7c7c7c;
}
.brush-grip {
    height: 9px;
    display: flex;
    align-items: center;
    justify-content: center;
}

/* tool presets */
.preset-popup {
    position: absolute;
    left: 18px;
    top: 75px;
    width: 330px;
    height: 213px;
    display: grid;
    grid-template-columns: 262px 1fr;
    grid-template-rows: 162px 1fr;
    padding: 12px 0 0 12px;
    border: 2px solid #8f8f8f;
    background: #b8b8b8;
    color: #151515;
}
.preset-list {
    display: flex;
    border: 1px solid #969696;
    border-width: 1px 0 0 1px;
}
.preset-list p {
    flex: 1;
    margin: 14px 0 0;
    text-align: center;
}
.preset-scroll {
    width: 20px;
    background: #a8a8a8;
}
.preset-side {
    display: flex;
    flex-direction: column;
    align-items: center;
    gap: 16px;
    padding: 2px 0 0;
}
.gear-btn {
    width: 29px;
    height: 29px;
    gap: 2px;
    border: 1px solid #6f6f6f;
    border-radius: 3px;
    background: #828282;
}
.dot {
    width: 3px;
    height: 2px;
    margin-top: 8px;
    background: #222;
}
.preset-only {
    display: flex;
    align-items: center;
    gap: 7px;
    padding-bottom: 6px;
}

.preset-menu {
    position: absolute;
    left: 336px;
    top: 121px;
    width: 237px;
    margin: 0;
    padding: 2px;
    list-style: none;
    border: 1px solid #999;
    background: #f0f0f0;
    box-shadow: 3px 3px 3px rgba(0,0,0,0.5);
}
.preset-menu button {
    width: 100%;
    height: 23px;
    padding: 0 0 1px 21px;
    justify-content: flex-start;
    color: #111;
    font-size: 14px;
}
.preset-menu button:disabled {
    color: #808080;
}
.preset-menu .hot {
    background: #3399ff;
    color: #fff;
}
.preset-menu .ticked {
    background: url('data:image/svg+xml,<svg xmlns="http://www.w3.org/2000/svg" width="10" height="10"><path d="M1 4l3 4L9 2" fill="none" stroke="black" stroke-width="2.500"/></svg>') no-repeat 3px 6px;
}
.rule {
    height: 1px;
    margin: 5px 0;
    background: #bbb;
}
```
